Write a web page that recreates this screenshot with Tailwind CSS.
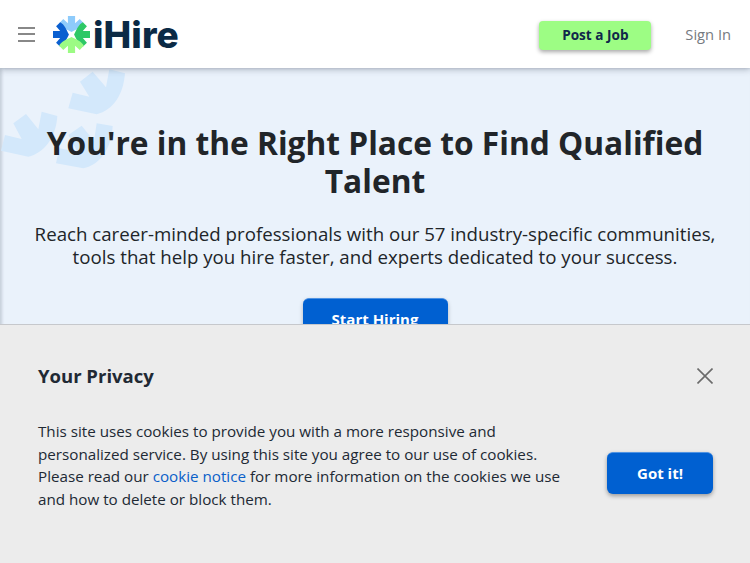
<!DOCTYPE html>
<html lang="en">
<head>
    <meta charset="UTF-8">
    <meta name="viewport" content="width=device-width, initial-scale=1.0">
    <title>iHire</title>
    <script src="https://cdn.jsdelivr.net/npm/@tailwindcss/browser@4"></script>
</head>
<body class="relative h-[563px] overflow-hidden bg-white font-['Open_Sans',sans-serif]">
    <!-- header -->
    <header class="relative z-10 flex h-[68px] items-center bg-white pl-[18px] pr-[19px] shadow-[0_2px_6px_rgba(60,70,90,0.3)]">
        <button class="flex w-[17px] flex-col gap-[4.5px]" aria-label="Menu">
            <span class="h-[2px] w-full bg-[#888]"></span>
            <span class="h-[2px] w-full bg-[#888]"></span>
            <span class="h-[2px] w-full bg-[#888]"></span>
        </button>
        <a class="ml-[18px] flex items-center" href="#">
            <svg class="h-[37px] w-[37px]" viewBox="0 0 36 36">
                <path fill="#8ecbfb" d="M6 7 10 3l4.500 4V0h7v7L26 3l4 4c-2 4-7 6-12 8.500C13 13 8 11 6 7z"/>
                <path fill="#0a5fd0" transform="rotate(-90 18 18)" d="M6 7 10 3l4.500 4V0h7v7L26 3l4 4c-2 4-7 6-12 8.500C13 13 8 11 6 7z"/>
                <path fill="#2ec866" transform="rotate(90 18 18)" d="M6 7 10 3l4.500 4V0h7v7L26 3l4 4c-2 4-7 6-12 8.500C13 13 8 11 6 7z"/>
                <path fill="#9cfb84" transform="rotate(180 18 18)" d="M6 7 10 3l4.500 4V0h7v7L26 3l4 4c-2 4-7 6-12 8.500C13 13 8 11 6 7z"/>
            </svg>
            <span class="ml-[3px] font-['Inter',sans-serif] text-[37px] leading-none font-extrabold tracking-[0.1px] text-[#0b2a45]">iHire</span>
        </a>
        <a class="mt-[2px] ml-auto flex h-[29px] w-[112px] items-center justify-center rounded-[4px] bg-[#9dfd84] text-[13.6px] font-bold text-[#10284a] shadow-[0_2px_4px_rgba(0,0,0,0.35)]" href="#">Post a Job</a>
        <a class="ml-[34px] text-[14.7px] text-[#757a80]" href="#">Sign In</a>
    </header>

    <!-- hero -->
    <main class="relative h-[495px] bg-[#eaf2fb] pt-[56px] text-center shadow-[inset_2px_0_3px_rgba(60,70,90,0.2)]">
        <svg class="absolute top-[-8px] left-0 h-[140px] w-[140px]" viewBox="0 0 420 420" fill="#d3e8fb">
            <path d="M278 35 318 82 328 28 375 40C370 105 340 150 290 163L205 145 218 98 268 110 240 65z"/>
            <path d="M78 162 115 208 125 155 172 168C168 235 130 280 85 290L3 272 15 225 65 237 40 190z"/>
            <path d="M245 197 282 243 290 190 338 198C335 265 300 315 250 325L168 310 178 265 232 275 205 225z"/>
        </svg>
        <h1 class="relative mx-auto w-[680px] text-[31.7px] leading-[38px] font-bold text-[#212529]">You're in the Right Place to Find Qualified Talent</h1>
        <p class="relative mx-auto mt-[22px] w-[700px] text-[18.7px] leading-[23px] text-[#212529]">Reach career-minded professionals with our 57 industry-specific communities, tools that help you hire faster, and experts dedicated to your success.</p>
        <a class="relative mx-auto mt-[30px] flex h-[42px] w-[145px] items-center justify-center rounded-[6px] border-t border-[#4f93e3] bg-[#0060d1] text-[15px] font-bold text-white shadow-[0_2px_4px_rgba(0,0,0,0.25)]" href="#">Start Hiring</a>
    </main>

    <!-- cookie notice -->
    <section class="absolute inset-x-0 top-[324px] bottom-0 z-20 border-t border-[#c6c8cc] bg-[#ececec] pl-[38px] pr-[37px]">
        <div class="flex items-center justify-between pt-[37px]">
            <h2 class="text-[18.5px] leading-[28px] font-bold text-[#212934]">Your Privacy</h2>
            <button aria-label="Close">
                <svg class="h-[16px] w-[16px]" viewBox="0 0 16 16" fill="none" stroke="#6b6b6b" stroke-width="1.6"><path d="M.5.5l15 15M15.5.5l-15 15"/></svg>
            </button>
        </div>
        <div class="mt-[30px] flex items-start justify-between">
            <p class="w-[530px] text-[15.2px] leading-[22.6px] text-[#212934]">This site uses cookies to provide you with a more responsive and personalized service. By using this site you agree to our use of cookies. Please read our <a class="text-[#0a60c9]" href="#">cookie notice</a> for more information on the cookies we use and how to delete or block them.</p>
            <button class="mt-[32px] flex h-[42px] w-[106px] items-center justify-center rounded-[6px] border-t border-[#4f93e3] bg-[#0060d1] text-[15px] font-bold text-white shadow-[0_2px_4px_rgba(0,0,0,0.35)]">Got it!</button>
        </div>
    </section>
</body>
</html>
